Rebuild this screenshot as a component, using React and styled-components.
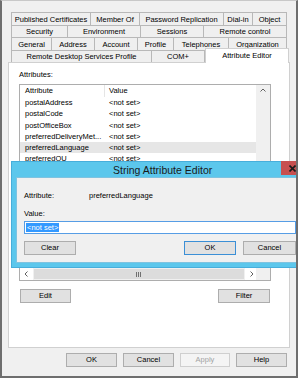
import React from "react";
import styled, { createGlobalStyle } from "styled-components";

const GlobalStyle = createGlobalStyle`
  html, body { margin: 0; padding: 0; background: #f0f0f0; overflow: hidden; }
  body { font-family: "Liberation Sans", Arial, sans-serif; font-size: 7.5px; color: #000; }
  * { box-sizing: border-box; }
`;

const Window = styled.div`
  position: relative;
  width: 298px;
  height: 378px;
  background: #f0f0f0;
  border-left: 2px solid #6e6e6e;
  border-right: 2px solid #6e6e6e;
  border-bottom: 2px solid #6e6e6e;
  border-top: 1px solid #c8c8c8;
  padding: 11px 6px 0 6px;
  overflow: hidden;
`;

const TabStrip = styled.div`
  display: flex;
  flex-direction: column;
  margin: 0 3px;
  position: relative;
  z-index: 2;
`;

const TabRow = styled.div`
  display: flex;
  align-items: flex-start;
  height: ${(p) => p.$h}px;
`;

const Tab = styled.div`
  flex: none;
  width: ${(p) => p.$w}px;
  height: 100%;
  display: flex;
  align-items: center;
  justify-content: center;
  white-space: nowrap;
  background: #efefef;
  border-top: 1px solid #b8b8b8;
  border-right: 1px solid #b8b8b8;
  &:first-child { border-left: 1px solid #b8b8b8; }
`;

const ActiveTab = styled(Tab)`
  background: #fff;
  height: calc(100% + 3px);
  margin-top: -2px;
  margin-right: -2px;
  width: ${(p) => p.$w + 2}px;
  align-items: flex-start;
  padding-top: 2px;
  border-top: 1px solid #d0d0d0;
  border-right: 1px solid #d0d0d0;
  border-left: 1px solid #d0d0d0;
`;

const Panel = styled.div`
  position: relative;
  z-index: 1;
  height: 286px;
  background: #fff;
  border: 1px solid #d0d0d0;
  padding: 0 17px 0 10px;
  display: flex;
  flex-direction: column;
`;

const Label = styled.div`
  height: 10px;
  line-height: 10px;
  margin-top: ${(p) => p.$mt || 0}px;
  white-space: nowrap;
`;

const ListBox = styled.div`
  margin-top: 4px;
  width: 252px;
  height: 197px;
  border: 1px solid #adadad;
  display: flex;
  flex-direction: column;
  background: #fff;
`;

const ListMain = styled.div`
  flex: 1;
  display: flex;
  min-height: 0;
`;

const ListContent = styled.div`
  flex: 1;
  overflow: hidden;
`;

const HeaderRow = styled.div`
  display: flex;
  height: 12px;
  line-height: 12px;
`;

const HeaderCell = styled.div`
  width: ${(p) => (p.$w ? p.$w + "px" : "auto")};
  flex: ${(p) => (p.$w ? "none" : "1")};
  padding-left: ${(p) => p.$pl}px;
  border-right: ${(p) => (p.$w ? "1px solid #e5e5e5" : "none")};
`;

const Row = styled.div`
  display: flex;
  height: 11.25px;
  line-height: 11.25px;
  background: ${(p) => (p.$sel ? "#e6e6e6" : "transparent")};
  white-space: nowrap;
`;

const Cell = styled.div`
  width: ${(p) => (p.$w ? p.$w + "px" : "auto")};
  flex: ${(p) => (p.$w ? "none" : "1")};
  padding-left: ${(p) => p.$pl}px;
  overflow: hidden;
`;

const VScroll = styled.div`
  width: 14px;
  background: #f0f0f0;
  display: flex;
  flex-direction: column;
`;

const ArrowBox = styled.div`
  width: ${(p) => p.$w}px;
  height: ${(p) => p.$h}px;
  display: flex;
  align-items: center;
  justify-content: center;
  background: ${(p) => p.$bg || "#f0f0f0"};
  color: #606060;
  flex: none;
`;

const HScroll = styled.div`
  height: 12px;
  display: flex;
  background: #f0f0f0;
`;

const Thumb = styled.div`
  flex: 1;
  background: #dcdcdc;
  border: 1px solid #f0f0f0;
  display: flex;
  align-items: center;
  justify-content: center;
`;

const Corner = styled.div`
  width: 14px;
  background: #f0f0f0;
`;

const ButtonRow = styled.div`
  display: flex;
  align-items: center;
  gap: ${(p) => p.$gap || 0}px;
  justify-content: ${(p) => p.$justify || "flex-start"};
  margin-top: ${(p) => p.$mt || 0}px;
  padding: ${(p) => p.$pad || "0"};
  width: ${(p) => (p.$w ? p.$w + "px" : "auto")};
`;

const Button = styled.div`
  width: ${(p) => p.$w}px;
  height: 14px;
  line-height: 12px;
  text-align: center;
  background: ${(p) => (p.$disabled ? "#f4f4f4" : "#e1e1e1")};
  color: ${(p) => (p.$disabled ? "#a3a3a3" : "#000")};
  border: 1px solid ${(p) => (p.$default ? "#3b8fd6" : p.$disabled ? "#cfcfcf" : "#adadad")};
  margin-left: ${(p) => (p.$push ? "auto" : "0")};
  flex: none;
`;

const Dialog = styled.div`
  position: absolute;
  left: 9px;
  top: 160px;
  width: 300px;
  height: 107px;
  background: #5cc7ec;
  border: 1px solid #47aedb;
  padding: 0 4px 4px 4px;
  display: flex;
  flex-direction: column;
  z-index: 5;
`;

const TitleBar = styled.div`
  height: 15px;
  line-height: 16px;
  font-size: 10.5px;
  color: #1a1a1a;
  padding-left: 97px;
  white-space: nowrap;
  font-family: "Liberation Sans", Arial, sans-serif;
`;

const CloseButton = styled.div`
  position: absolute;
  left: 269px;
  top: -1px;
  width: 23px;
  height: 14px;
  background: #c75050;
  display: flex;
  align-items: center;
  justify-content: center;
`;

const DialogBody = styled.div`
  flex: 1;
  background: #f0f0f0;
  border: 1px solid #7fc3e0;
  padding: 12px 0 0 7px;
  display: flex;
  flex-direction: column;
`;

const FieldRow = styled.div`
  display: flex;
  height: 11px;
  line-height: 11px;
  white-space: nowrap;
  margin-top: ${(p) => p.$mt || 0}px;
`;

const FieldLabel = styled.div`
  width: 65px;
  flex: none;
`;

const Input = styled.div`
  margin-top: 2px;
  width: 272px;
  height: 13px;
  background: #fff;
  border: 1px solid #569de5;
  padding: 1px 1px;
  display: flex;
`;

const Selection = styled.span`
  background: #3399ff;
  color: #fff;
  line-height: 9px;
  padding: 0 1px;
  white-space: nowrap;
`;

const rows = [
  { h: 13, tabs: [["Published Certificates", 11, 91], ["Member Of", 91, 140], ["Password Replication", 140, 224], ["Dial-in", 224, 253], ["Object", 253, 287]] },
  { h: 12, tabs: [["Security", 11, 68], ["Environment", 68, 141], ["Sessions", 141, 204], ["Remote control", 204, 287]] },
  { h: 13, tabs: [["General", 11, 52], ["Address", 52, 95], ["Account", 95, 138], ["Profile", 138, 174], ["Telephones", 174, 229], ["Organization", 229, 287]] },
  { h: 12, tabs: [["Remote Desktop Services Profile", 11, 152], ["COM+", 152, 205], ["Attribute Editor", 205, 287, true]] },
];

const attrs = [
  ["postalAddress", "<not set>"],
  ["postalCode", "<not set>"],
  ["postOfficeBox", "<not set>"],
  ["preferredDeliveryMet...", "<not set>"],
  ["preferredLanguage", "<not set>", true],
  ["preferredOU", "<not set>"],
];

const Chevron = ({ dir }) => {
  const d = {
    up: "M1.5 4.5 L4 2 L6.5 4.5",
    left: "M4.5 1.5 L2 4 L4.5 6.5",
    right: "M3.5 1.5 L6 4 L3.5 6.5",
  }[dir];
  return (
    <svg width="8" height="8" viewBox="0 0 8 8">
      <path d={d} fill="none" stroke="#606060" strokeWidth="1" />
    </svg>
  );
};

const Grip = () => (
  <svg width="6" height="5" viewBox="0 0 6 5">
    <path d="M0.5 0 V5 M2.5 0 V5 M4.5 0 V5" stroke="#707070" strokeWidth="1" />
  </svg>
);

export default function App() {
  return (
    <>
      <GlobalStyle />
      <Window>
        <TabStrip>
          {rows.map((r, i) => (
            <TabRow key={i} $h={r.h}>
              {r.tabs.map(([label, l, rr, active]) =>
                active ? (
                  <ActiveTab key={label} $w={rr - l}>{label}</ActiveTab>
                ) : (
                  <Tab key={label} $w={rr - l}>{label}</Tab>
                )
              )}
            </TabRow>
          ))}
        </TabStrip>
        <Panel>
          <Label $mt={7}>Attributes:</Label>
          <ListBox>
            <ListMain>
              <ListContent>
                <HeaderRow>
                  <HeaderCell $w={85} $pl={5}>Attribute</HeaderCell>
                  <HeaderCell $pl={4}>Value</HeaderCell>
                </HeaderRow>
                {attrs.map(([a, v, sel]) => (
                  <Row key={a} $sel={sel}>
                    <Cell $w={85} $pl={5}>{a}</Cell>
                    <Cell $pl={4}>{v}</Cell>
                  </Row>
                ))}
              </ListContent>
              <VScroll>
                <ArrowBox $w={14} $h={12}><Chevron dir="up" /></ArrowBox>
              </VScroll>
            </ListMain>
            <HScroll>
              <ArrowBox $w={13} $h={12} $bg="#fff"><Chevron dir="left" /></ArrowBox>
              <Thumb><Grip /></Thumb>
              <ArrowBox $w={11} $h={12} $bg="#fff"><Chevron dir="right" /></ArrowBox>
              <Corner />
            </HScroll>
          </ListBox>
          <ButtonRow $mt={8} $w={252} $pad="0 1px" $justify="space-between">
            <Button $w={51}>Edit</Button>
            <Button $w={52}>Filter</Button>
          </ButtonRow>
        </Panel>
        <ButtonRow $mt={5} $gap={6} $justify="flex-end" $pad="0 3px 0 0">
          <Button $w={51}>OK</Button>
          <Button $w={51}>Cancel</Button>
          <Button $w={50} $disabled>Apply</Button>
          <Button $w={51}>Help</Button>
        </ButtonRow>

        <Dialog>
          <TitleBar>String Attribute Editor</TitleBar>
          <CloseButton>
            <svg width="7" height="7" viewBox="0 0 7 7">
              <path d="M0.5 0.5 L6.5 6.5 M6.5 0.5 L0.5 6.5" stroke="#1a1a1a" strokeWidth="1.6" />
            </svg>
          </CloseButton>
          <DialogBody>
            <FieldRow>
              <FieldLabel>Attribute:</FieldLabel>
              <span>preferredLanguage</span>
            </FieldRow>
            <FieldRow $mt={7}>
              <FieldLabel>Value:</FieldLabel>
            </FieldRow>
            <Input>
              <Selection>&lt;not set&gt;</Selection>
            </Input>
            <ButtonRow $mt={7} $gap={7} $w={272}>
              <Button $w={52}>Clear</Button>
              <Button $w={52} $push $default>OK</Button>
              <Button $w={53}>Cancel</Button>
            </ButtonRow>
          </DialogBody>
        </Dialog>
      </Window>
    </>
  );
}
